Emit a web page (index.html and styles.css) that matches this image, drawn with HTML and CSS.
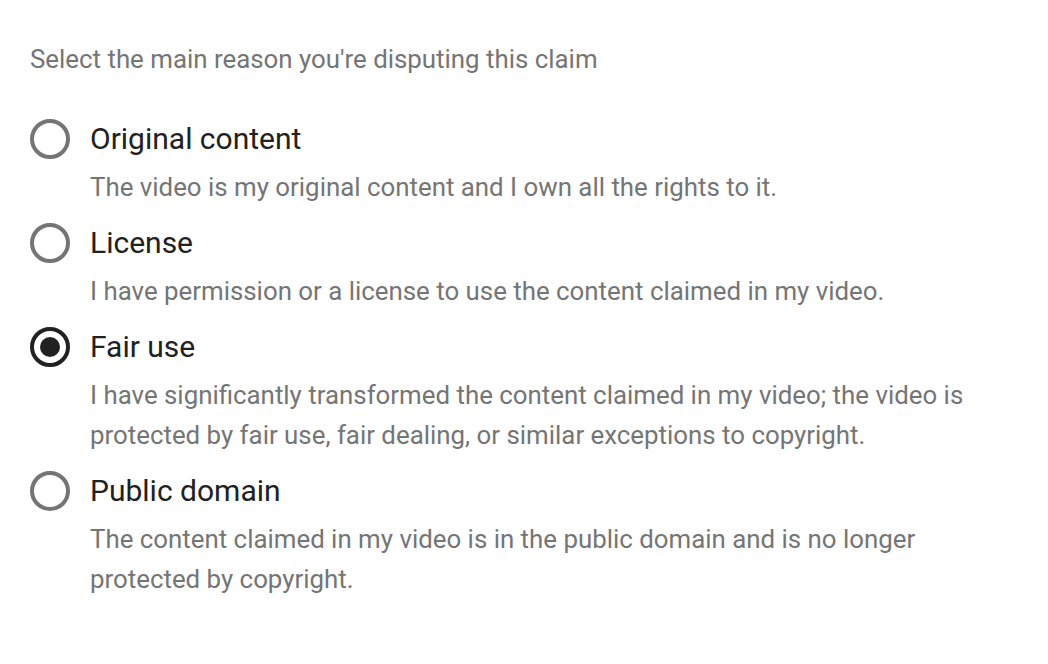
FILE: index.html
```html
<!DOCTYPE html>
<html>
<head>
<meta charset="utf-8">
<link rel="stylesheet" href="styles.css">
</head>
<body>
<div class="page">
  <p class="prompt">Select the main reason you're disputing this claim</p>
  <div class="options">
    <div class="option">
      <div class="row"><span class="radio"></span><span class="label">Original content</span></div>
      <p class="desc">The video is my original content and I own all the rights to it.</p>
    </div>
    <div class="option">
      <div class="row"><span class="radio"></span><span class="label">License</span></div>
      <p class="desc">I have permission or a license to use the content claimed in my video.</p>
    </div>
    <div class="option">
      <div class="row"><span class="radio checked"></span><span class="label">Fair use</span></div>
      <p class="desc">I have significantly transformed the content claimed in my video; the video is protected by fair use, fair dealing, or similar exceptions to copyright.</p>
    </div>
    <div class="option">
      <div class="row"><span class="radio"></span><span class="label">Public domain</span></div>
      <p class="desc">The content claimed in my video is in the public domain and is no longer protected by copyright.</p>
    </div>
  </div>
</div>
</body>
</html>
```
FILE: styles.css
```css
html, body {
  margin: 0;
  padding: 0;
  background: #ffffff;
}
body {
  font-family: Roboto, "Noto Sans", sans-serif;
}
.page {
  padding: 43px 30px 0 30px;
}
.prompt {
  margin: 0;
  font-size: 25.85px;
  line-height: 32px;
  color: #757575;
}
.options {
  margin-top: 44px;
  display: flex;
  flex-direction: column;
  gap: 16px;
}
.row {
  display: flex;
  align-items: center;
  height: 40px;
}
.radio {
  box-sizing: border-box;
  width: 40px;
  height: 40px;
  border: 4px solid #757575;
  border-radius: 50%;
  display: flex;
  align-items: center;
  justify-content: center;
  flex: none;
}
.radio.checked {
  border-color: #212121;
}
.radio.checked::after {
  content: "";
  width: 20px;
  height: 20px;
  border-radius: 50%;
  background: #212121;
}
.label {
  margin-left: 20px;
  padding-bottom: 1px;
  font-size: 30px;
  color: #212121;
}
.desc {
  margin: 8px 0 0 60px;
  font-size: 25.85px;
  line-height: 40px;
  color: #757575;
}
```
